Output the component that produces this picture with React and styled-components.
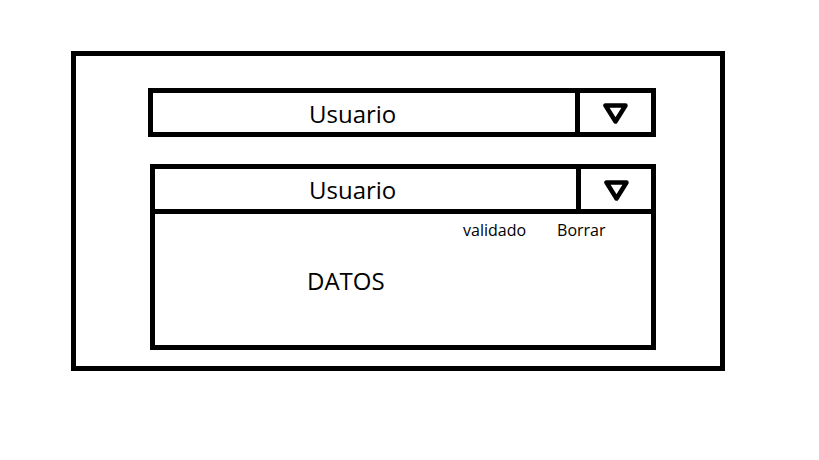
import React from "react";
import styled, { createGlobalStyle } from "styled-components";

const Global = createGlobalStyle`
  html, body { margin: 0; padding: 0; background: #fff; }
  body { font-family: "Open Sans", "Noto Sans", sans-serif; color: #000; }
  * { box-sizing: border-box; }
`;

const Page = styled.div`
  width: 819px;
  height: 460px;
  padding: 51px 0 0 71px;
  background: #fff;
`;

const Frame = styled.div`
  width: 654px;
  height: 320px;
  border: 5px solid #000;
  display: flex;
  flex-direction: column;
  align-items: flex-start;
  gap: 27px;
  padding: 32px 0 0 72px;
`;

const Dropdown = styled.div`
  width: ${(p) => p.$width}px;
  margin-left: ${(p) => p.$offset || 0}px;
  border: 5px solid #000;
  display: flex;
  flex-direction: column;
`;

const Header = styled.div`
  height: ${(p) => p.$height}px;
  display: flex;
  border-bottom: ${(p) => (p.$open ? "5px solid #000" : "none")};
  box-sizing: content-box;
`;

const Label = styled.div`
  flex: 1;
  padding: 9px 0 0 ${(p) => p.$indent}px;
  font-size: 24px;
  line-height: 1;
  white-space: nowrap;
`;

const ArrowCell = styled.div`
  width: ${(p) => p.$width}px;
  border-left: 5px solid #000;
  display: flex;
  align-items: center;
  justify-content: center;
  padding-top: 2px;
`;

const Body = styled.div`
  height: 131px;
  display: flex;
  flex-direction: column;
  padding: 8px 0 0 0;
`;

const Actions = styled.div`
  display: flex;
  gap: 31px;
  padding-left: 308px;
  font-size: 16px;
  line-height: 1;
`;

const Action = styled.span`
  white-space: nowrap;
`;

const Data = styled.div`
  margin-top: 31px;
  padding-left: 152px;
  font-size: 24px;
  line-height: 1;
`;

const Arrow = () => (
  <svg width="25" height="21" viewBox="0 0 25 21">
    <path
      d="M2.5 2.5 L22.5 2.5 L12.5 18.5 Z"
      fill="none"
      stroke="#000"
      strokeWidth="4.5"
      strokeLinejoin="round"
    />
  </svg>
);

export default function App() {
  return (
    <>
      <Global />
      <Page>
        <Frame>
          <Dropdown $width={508}>
            <Header $height={39}>
              <Label $indent={156}>Usuario</Label>
              <ArrowCell $width={76}>
                <Arrow />
              </ArrowCell>
            </Header>
          </Dropdown>
          <Dropdown $width={506} $offset={2}>
            <Header $height={40} $open>
              <Label $indent={154}>Usuario</Label>
              <ArrowCell $width={75}>
                <Arrow />
              </ArrowCell>
            </Header>
            <Body>
              <Actions>
                <Action>validado</Action>
                <Action>Borrar</Action>
              </Actions>
              <Data>DATOS</Data>
            </Body>
          </Dropdown>
        </Frame>
      </Page>
    </>
  );
}
